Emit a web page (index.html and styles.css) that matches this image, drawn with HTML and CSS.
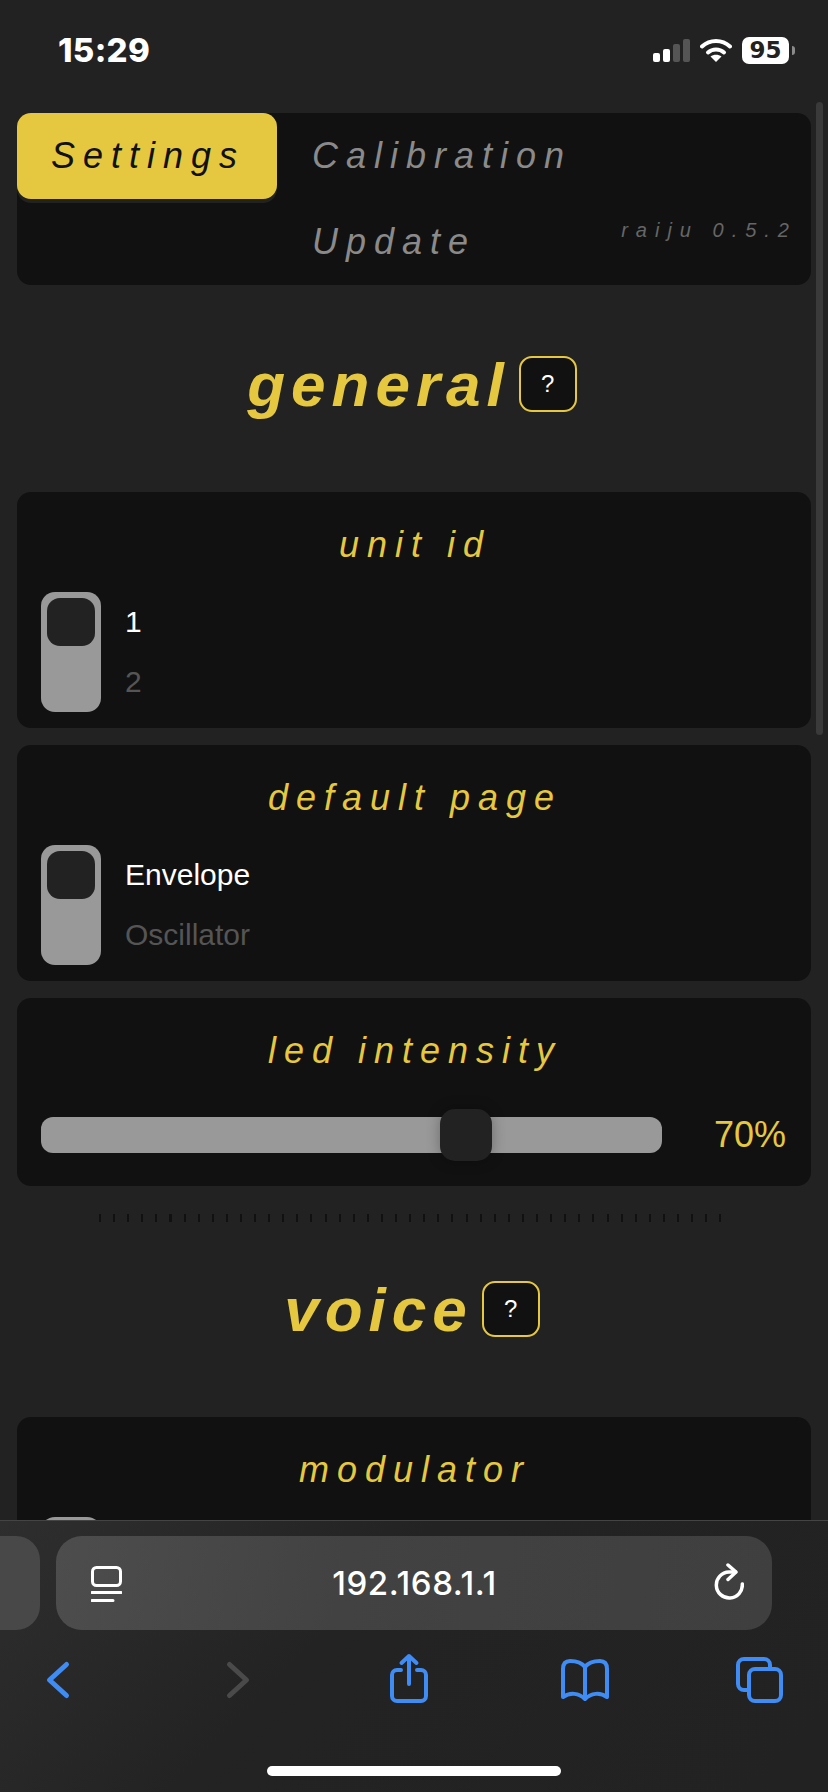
FILE: index.html
```html
<!DOCTYPE html>
<html lang="en">
<head>
<meta charset="utf-8">
<title>raiju</title>
<link rel="stylesheet" href="styles.css">
</head>
<body>
<div class="screen">
  <header class="status">
    <span class="time">15:29</span>
    <div class="status-icons">
      <div class="signal"><i class="b1"></i><i class="b2"></i><i class="b3"></i><i class="b4"></i></div>
      <svg class="wifi" width="32" height="24" viewBox="0 0 32 24"><path d="M2 8.500C10 1 22 1 30 8.500" fill="none" stroke="#fff" stroke-width="4" stroke-linecap="round"/><path d="M8 14.500C12.500 10.500 19.500 10.500 24 14.500" fill="none" stroke="#fff" stroke-width="4" stroke-linecap="round"/><path d="M16 24L10.500 18.500C13.500 16 18.500 16 21.500 18.500Z" fill="#fff"/></svg>
      <div class="battery"><span>95</span><i class="nub"></i></div>
    </div>
  </header>

  <nav class="tabs">
    <a class="tab active">Settings</a>
    <a class="tab">Calibration</a>
    <a class="tab second">Update</a>
    <span class="version">raiju 0.5.2</span>
  </nav>

  <section class="section-head first">
    <h1>general</h1><button class="help">?</button>
  </section>

  <div class="cards">
    <article class="card">
      <h2>unit id</h2>
      <div class="switch-row">
        <div class="switch"><i></i></div>
        <ul class="options"><li class="on">1</li><li>2</li></ul>
      </div>
    </article>
    <article class="card">
      <h2>default page</h2>
      <div class="switch-row">
        <div class="switch"><i></i></div>
        <ul class="options"><li class="on">Envelope</li><li>Oscillator</li></ul>
      </div>
    </article>
    <article class="card">
      <h2>led intensity</h2>
      <div class="slider-row">
        <div class="track"><i class="thumb"></i></div>
        <span class="value">70%</span>
      </div>
    </article>
  </div>

  <div class="ticks"></div>

  <section class="section-head">
    <h1>voice</h1><button class="help">?</button>
  </section>

  <article class="card">
    <h2>modulator</h2>
    <div class="switch-row">
      <div class="switch"><i></i></div>
      <ul class="options"><li class="on">Off</li><li>On</li></ul>
    </div>
  </article>

  <div class="scrollbar"></div>

  <footer class="browser">
    <div class="address-row">
      <div class="prev-tab"></div>
      <div class="address">
        <svg class="reader" width="31" height="38" viewBox="0 0 31 38"><rect x="1.500" y="1.500" width="28" height="18" rx="4" fill="none" stroke="#fff" stroke-width="3"/><path d="M1 26.500H30M1 34.500H22" stroke="#fff" stroke-width="3" stroke-linecap="round"/></svg>
        <span class="url">192.168.1.1</span>
        <svg width="30" height="40" viewBox="0 0 30 40"><path d="M21.500 9H15A13 13 0 1 0 28.300 21" fill="none" stroke="#fff" stroke-width="3.500" stroke-linecap="round" stroke-linejoin="round"/><path d="M14 2L22 9L14 16.500" fill="none" stroke="#fff" stroke-width="3.500" stroke-linecap="round" stroke-linejoin="round"/></svg>
      </div>
    </div>
    <div class="tools">
      <svg width="60" height="60" viewBox="0 0 60 60"><path d="M38.500 14.500L21.500 30L38.500 45.500" fill="none" stroke="#3f8cf5" stroke-width="5" stroke-linecap="round" stroke-linejoin="round"/></svg>
      <svg class="fwd" width="60" height="60" viewBox="0 0 60 60"><path d="M21.500 14.500L38.500 30L21.500 45.500" fill="none" stroke="#4a4a4a" stroke-width="5" stroke-linecap="round" stroke-linejoin="round"/></svg>
      <svg width="60" height="60" viewBox="0 0 60 60"><g fill="none" stroke="#3f8cf5" stroke-width="4" stroke-linecap="round" stroke-linejoin="round"><path d="M22 20H18A5 5 0 0 0 13 25V46A5 5 0 0 0 18 51H42A5 5 0 0 0 47 46V25A5 5 0 0 0 42 20H38"/><path d="M30 34V6M22.500 13L30 6L37.500 13"/></g></svg>
      <svg width="60" height="60" viewBox="0 0 60 60"><path d="M30 17C27 13 21 11 15 11C10 11 8 14 8 19V47C15 42 24 43 30 49C36 43 45 42 52 47V19C52 14 50 11 45 11C39 11 33 13 30 17ZM30 17V47" fill="none" stroke="#3f8cf5" stroke-width="4" stroke-linejoin="round"/></svg>
      <svg width="60" height="60" viewBox="0 0 60 60"><g fill="none" stroke="#3f8cf5" stroke-width="4"><rect x="19" y="19" width="32" height="32" rx="6"/><path d="M40 17V15A6 6 0 0 0 34 9H14A6 6 0 0 0 8 15V34A6 6 0 0 0 14 40H17"/></g></svg>
    </div>
    <div class="home-bar"></div>
  </footer>
</div>
</body>
</html>
```
FILE: styles.css
```css
* { box-sizing: border-box; }
html, body { margin: 0; padding: 0; background: #222; }
.screen {
  position: relative;
  width: 828px;
  height: 1792px;
  overflow: hidden;
  padding: 0 17px;
  background: #222;
  font-family: "Liberation Sans", Arial, sans-serif;
  color: #fff;
}
.status {
  display: flex;
  justify-content: space-between;
  align-items: center;
  height: 113px;
  margin: 0 -17px;
  padding: 0 33px 13px 58px;
}
.time { font-family: Inter, sans-serif; font-weight: 800; font-size: 33px; letter-spacing: .3px; }
.status-icons { display: flex; align-items: center; gap: 10px; }
.signal { display: flex; align-items: flex-end; gap: 3px; height: 24px; }
.signal i { display: block; width: 7px; border-radius: 2px; background: #fff; }
.signal .b1 { height: 9px; }
.signal .b2 { height: 13px; }
.signal .b3 { height: 18px; background: #555; }
.signal .b4 { height: 23px; background: #555; }
.battery {
  position: relative;
  width: 47px;
  height: 27px;
  margin-right: 6px;
  border-radius: 7px;
  background: #fff;
  color: #222;
  font-family: "DejaVu Sans", sans-serif;
  font-weight: 700;
  font-size: 23px;
  line-height: 27px;
  text-align: center;
}
.nub {
  position: absolute;
  right: -6px;
  top: 9px;
  width: 3px;
  height: 9px;
  border-radius: 0 3px 3px 0;
  background: #8a8a8a;
}
.tabs {
  position: relative;
  display: grid;
  grid-template-columns: 260px 1fr;
  grid-auto-rows: 86px;
  border-radius: 14px;
  background: #111;
}
.tab {
  display: flex;
  align-items: center;
  padding-left: 35px;
  font-size: 36px;
  font-style: italic;
  letter-spacing: 8px;
  color: #8a8a8a;
}
.tab.active {
  padding-left: 34px;
  border-radius: 14px;
  background: #e5c840;
  color: #111;
  box-shadow: 0 4px 0 #222;
}
.tab.second { grid-column: 2; }
.version {
  position: absolute;
  top: 106px;
  right: 14px;
  font-size: 20px;
  font-style: italic;
  letter-spacing: 8px;
  color: #666;
}
.section-head {
  display: flex;
  justify-content: center;
  align-items: center;
  height: 56px;
  margin: 59px 0 80px;
  padding-right: 4px;
}
.section-head.first { margin-top: 71px; }
.section-head h1 {
  margin: 0 9px 0 0;
  font-size: 62px;
  font-style: italic;
  font-weight: 700;
  letter-spacing: 6px;
  color: #e5c840;
}
.help {
  width: 58px;
  height: 56px;
  padding: 0;
  border: 2px solid #e5c840;
  border-radius: 13px;
  background: #111;
  color: #fff;
  font-family: "Liberation Sans", Arial, sans-serif;
  font-size: 24px;
}
.cards { display: flex; flex-direction: column; gap: 17px; }
.card {
  padding: 0 25px 16px 24px;
  border-radius: 14px;
  background: #111;
}
.card h2 {
  display: flex;
  justify-content: center;
  align-items: center;
  height: 100px;
  margin: 0;
  padding: 6px 0 0 3px;
  font-size: 36px;
  font-style: italic;
  font-weight: 400;
  letter-spacing: 8px;
  white-space: pre;
  color: #e5c840;
}
.switch-row { display: flex; gap: 24px; }
.switch {
  width: 60px;
  height: 120px;
  padding: 6px;
  border-radius: 14px;
  background: #999;
}
.switch i {
  display: block;
  width: 48px;
  height: 48px;
  border-radius: 13px;
  background: #222;
}
.options {
  display: flex;
  flex-direction: column;
  margin: 0;
  padding: 0;
  list-style: none;
  font-size: 30px;
  color: #555;
}
.options li { display: flex; align-items: center; height: 60px; }
.options .on { color: #fff; }
.slider-row {
  display: flex;
  justify-content: space-between;
  align-items: center;
  height: 52px;
  margin: 11px 0 9px;
}
.track {
  position: relative;
  width: 621px;
  height: 36px;
  border-radius: 12px;
  background: #999;
}
.thumb {
  position: absolute;
  left: 399px;
  top: -8px;
  width: 52px;
  height: 52px;
  border-radius: 15px;
  background: #222;
  box-shadow: 0 0 14px rgba(0, 0, 0, .3);
}
.value { font-size: 36px; color: #e5c840; }
.ticks {
  width: 624px;
  height: 8px;
  margin: 28px 0 0 82px;
  background: repeating-linear-gradient(90deg, #111 0 2px, transparent 2px 14.100px);
}
.scrollbar {
  position: absolute;
  left: 816px;
  top: 102px;
  width: 7px;
  height: 633px;
  border-radius: 4px;
  background: #3a3a3a;
}
.browser {
  position: absolute;
  left: 0;
  right: 0;
  bottom: 0;
  height: 272px;
  border-top: 1px solid #444;
  background: linear-gradient(135deg, #2e2e2e 0, #232323 40%, #222 100%);
}
.address-row { display: flex; gap: 16px; padding-top: 15px; }
.prev-tab {
  width: 40px;
  height: 94px;
  border-radius: 0 24px 24px 0;
  background: #484848;
}
.address {
  display: flex;
  justify-content: space-between;
  align-items: center;
  width: 716px;
  height: 94px;
  padding: 0 28px 0 35px;
  border-radius: 26px;
  background: linear-gradient(100deg, #4d4d4d 0, #424242 40%, #3f3f3f 100%);
}
.reader { margin-top: 4px; }
.url {
  margin-right: 7px;
  font-family: Inter, sans-serif;
  font-weight: 500;
  font-size: 33px;
  letter-spacing: .6px;
  color: #fff;
}
.tools {
  display: flex;
  justify-content: space-between;
  padding: 0 38px 0 28px;
  margin-top: 20px;
}
.fwd { transform: translateX(4px); }
.home-bar {
  width: 294px;
  height: 10px;
  margin: 56px 0 0 267px;
  border-radius: 5px;
  background: #fff;
}
```
